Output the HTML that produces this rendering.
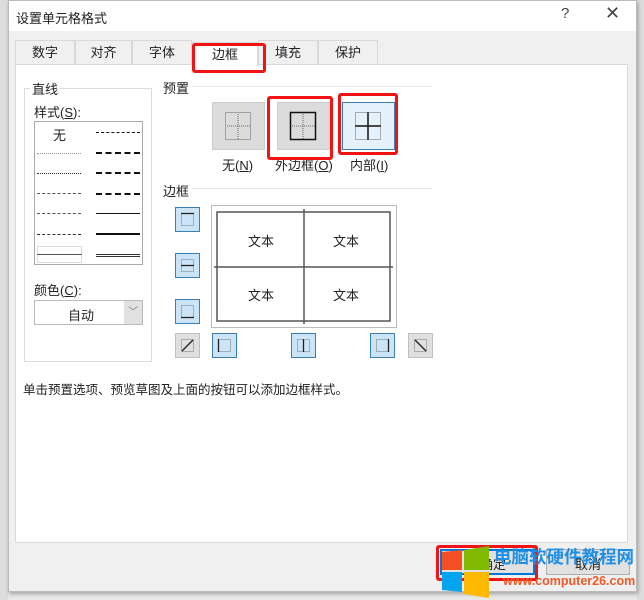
<!DOCTYPE html>
<html><head><meta charset="utf-8"><style>
*{box-sizing:border-box;margin:0;padding:0}
body{width:644px;height:600px;overflow:hidden;background:#e8e8e8;font-family:"Liberation Sans","Noto Sans CJK SC",sans-serif;font-size:13px;color:#222;position:relative}
.a{position:absolute;white-space:nowrap}
.dlg{left:8px;top:0;width:629px;height:592px;background:#f0f0f0;border:1px solid #bbb;box-shadow:1px 2px 4px rgba(0,0,0,.3)}
.tab{position:absolute;top:40px;height:24px;border:1px solid #d9d9d9;border-bottom:none;background:#f0f0f0;text-align:center;line-height:23px;font-size:13px}
.red{position:absolute;border:3px solid #f21414;border-radius:3px}
.pb{position:absolute;width:53px;height:48px;background:#dcdcdc;border:1px solid #ccc}
.sb{position:absolute;width:25px;height:25px;background:#cce4f7;border:1px solid #3c7fb1}
.sb.g{background:#e0e0e0;border-color:#c0c0c0}
.ln{position:absolute;height:0}
</style></head><body>
<div class="a" style="left:0;top:0;width:8px;height:600px;background:#ddd"></div>
<div class="a" style="left:637px;top:0;width:7px;height:600px;background:#ddd"></div>
<div class="dlg a"></div>
<div class="a" style="left:9px;top:1px;width:627px;height:30px;background:#fff"></div>
<div class="a" style="left:16px;top:8px;font-size:13px">设置单元格格式</div>
<div class="a" style="left:561px;top:5px;font-size:15px;color:#444">?</div>
<div class="a" style="left:605px;top:3px;font-size:18px;color:#444">✕</div>
<div class="tab" style="left:15px;width:60px">数字</div>
<div class="tab" style="left:75px;width:57px">对齐</div>
<div class="tab" style="left:132px;width:60px">字体</div>
<div class="tab" style="left:258px;width:60px">填充</div>
<div class="tab" style="left:318px;width:60px">保护</div>
<div class="a" style="left:15px;top:64px;width:613px;height:479px;background:#fff;border:1px solid #d9d9d9"></div>
<div class="tab" style="left:192px;top:42px;width:66px;height:24px;background:#fff;border-color:#d9d9d9">边框</div>
<div class="red" style="left:192px;top:43px;width:74px;height:30px"></div>
<div class="a" style="left:24px;top:88px;width:128px;height:274px;border:1px solid #dcdcdc"></div>
<div class="a" style="left:30px;top:79px;background:#fff;padding:0 2px">直线</div>
<div class="a" style="left:34px;top:102px">样式(<u>S</u>):</div>
<div class="a" style="left:34px;top:121px;width:109px;height:144px;border:1px solid #aaa;background:#fff"></div>
<div class="a" style="left:53px;top:125px">无</div>
<div class="ln" style="left:37px;top:153px;width:44px;border-top:1px dotted #999"></div>
<div class="ln" style="left:37px;top:173px;width:44px;border-top:1px dotted #333"></div>
<div class="ln" style="left:37px;top:193px;width:44px;border-top:1px dashed #555"></div>
<div class="ln" style="left:37px;top:213px;width:44px;border-top:1px dashed #555"></div>
<div class="ln" style="left:37px;top:234px;width:44px;border-top:1px dashed #333"></div>
<div class="a" style="left:37px;top:246px;width:45px;height:17px;border:1px solid #ddd"></div>
<div class="ln" style="left:37px;top:254px;width:45px;border-top:1px solid #555"></div>
<div class="ln" style="left:96px;top:132px;width:44px;border-top:1px dashed #111"></div>
<div class="ln" style="left:96px;top:152px;width:44px;border-top:2px dashed #111"></div>
<div class="ln" style="left:96px;top:172px;width:44px;border-top:2px dashed #111"></div>
<div class="ln" style="left:96px;top:193px;width:44px;border-top:2px dashed #111"></div>
<div class="ln" style="left:96px;top:213px;width:44px;border-top:1px solid #111"></div>
<div class="ln" style="left:96px;top:233px;width:44px;border-top:2px solid #111"></div>
<div class="ln" style="left:96px;top:254px;width:44px;border-top:3px double #333"></div>
<div class="a" style="left:34px;top:280px">颜色(<u>C</u>):</div>
<div class="a" style="left:34px;top:300px;width:109px;height:25px;border:1px solid #bbb;background:#fff"></div>
<div class="a" style="left:68px;top:305px">自动</div>
<div class="a" style="left:124px;top:301px;width:18px;height:23px;background:#e1e1e1;color:#777;font-size:10px;text-align:center;line-height:23px">﹀</div>
<div class="a" style="left:163px;top:78px">预置</div>
<div class="ln" style="left:192px;top:86px;width:240px;border-top:1px solid #e6e6e6"></div>
<div class="pb" style="left:212px;top:102px"></div>
<div class="pb" style="left:277px;top:102px"></div>
<div class="pb" style="left:342px;top:102px;background:#e5f1fb;border-color:#3c7fb1"></div>
<svg class="a" style="left:212px;top:102px" width="190" height="50">
<g fill="none" stroke="#666" stroke-dasharray="1,1">
<rect x="13.5" y="10.5" width="25" height="27"/><line x1="26" y1="10" x2="26" y2="38"/><line x1="13" y1="24" x2="39" y2="24"/>
<line x1="91" y1="10" x2="91" y2="38"/><line x1="78" y1="24" x2="104" y2="24"/>
<rect x="143.5" y="10.5" width="25" height="27"/></g>
<rect x="78.5" y="10.5" width="25" height="27" fill="none" stroke="#111" stroke-width="1.5"/>
<line x1="156" y1="10" x2="156" y2="38" stroke="#111" stroke-width="1.5"/><line x1="143" y1="24" x2="169" y2="24" stroke="#111" stroke-width="1.5"/>
</svg>
<div class="a" style="left:222px;top:155px">无(<u>N</u>)</div>
<div class="a" style="left:275px;top:155px">外边框(<u>O</u>)</div>
<div class="a" style="left:350px;top:155px">内部(<u>I</u>)</div>
<div class="red" style="left:267px;top:96px;width:66px;height:64px"></div>
<div class="red" style="left:338px;top:93px;width:60px;height:62px"></div>
<div class="a" style="left:163px;top:181px">边框</div>
<div class="ln" style="left:192px;top:188px;width:240px;border-top:1px solid #e6e6e6"></div>
<div class="a" style="left:211px;top:205px;width:186px;height:123px;border:1px solid #bbb"></div>
<svg class="a" style="left:211px;top:205px" width="186" height="123">
<g stroke="#555" stroke-width="1.5" fill="none"><rect x="6" y="7" width="173" height="109"/><line x1="93" y1="4" x2="93" y2="119"/><line x1="3" y1="62" x2="182" y2="62"/></g>
<g font-family="Noto Sans CJK SC,sans-serif" font-size="13" fill="#222"><text x="37" y="41">文本</text><text x="122" y="41">文本</text><text x="37" y="95">文本</text><text x="122" y="95">文本</text></g>
</svg>
<div class="sb" style="left:175px;top:207px"></div>
<div class="sb" style="left:175px;top:253px"></div>
<div class="sb" style="left:175px;top:299px"></div>
<div class="sb g" style="left:175px;top:333px"></div>
<div class="sb" style="left:212px;top:333px"></div>
<div class="sb" style="left:291px;top:333px"></div>
<div class="sb" style="left:370px;top:333px"></div>
<div class="sb g" style="left:408px;top:333px"></div>
<svg class="a" style="left:175px;top:207px" width="260" height="152">
<g fill="none" stroke="#777" stroke-dasharray="1,1">
<rect x="6.5" y="6.5" width="12" height="12"/><rect x="6.5" y="52.5" width="12" height="12"/><rect x="6.5" y="98.5" width="12" height="12"/>
<rect x="6.5" y="132.5" width="12" height="12"/><rect x="43.5" y="132.5" width="12" height="12"/><rect x="122.5" y="132.5" width="12" height="12"/><rect x="201.5" y="132.5" width="12" height="12"/><rect x="239.5" y="132.5" width="12" height="12"/></g>
<g stroke="#222" stroke-width="1.3">
<line x1="6" y1="6.5" x2="19" y2="6.5"/><line x1="6" y1="58.5" x2="19" y2="58.5"/><line x1="6" y1="110.5" x2="19" y2="110.5"/>
<line x1="7" y1="144" x2="18" y2="133"/><line x1="43.5" y1="132" x2="43.5" y2="145"/><line x1="128.5" y1="132" x2="128.5" y2="145"/><line x1="213.5" y1="132" x2="213.5" y2="145"/><line x1="240" y1="133" x2="251" y2="144"/></g>
</svg>
<div class="a" style="left:23px;top:379px;font-size:12.5px">单击预置选项、预览草图及上面的按钮可以添加边框样式。</div>
<div class="a" style="left:440px;top:549px;width:95px;height:26px;background:#e1e1e1;border:2px solid #0078d7"></div>
<div class="a" style="left:480px;top:554px">确定</div>
<div class="a" style="left:546px;top:549px;width:84px;height:26px;background:#e1e1e1;border:1px solid #adadad"></div>
<div class="a" style="left:575px;top:554px">取消</div>
<div class="red" style="left:436px;top:545px;width:102px;height:36px"></div>
<svg class="a" style="left:440px;top:546px" width="50" height="54">
<polygon points="2,6 22,4 22,24 2,24" fill="#f25022"/><polygon points="24,4 49,0 49,24 24,24" fill="#7fba00"/>
<polygon points="2,26 22,26 22,46 2,44" fill="#00a4ef"/><polygon points="24,26 49,26 49,52 24,48" fill="#ffb900"/>
</svg>
<div class="a" style="left:494px;top:546px;font-size:17.5px;line-height:22px;font-weight:bold;color:#1e90e8">电脑软硬件教程网</div>
<div class="a" style="left:503px;top:573px;font-size:12.5px;line-height:16px;font-weight:bold;color:#f05a28">www.computer26.com</div>
</body></html>
